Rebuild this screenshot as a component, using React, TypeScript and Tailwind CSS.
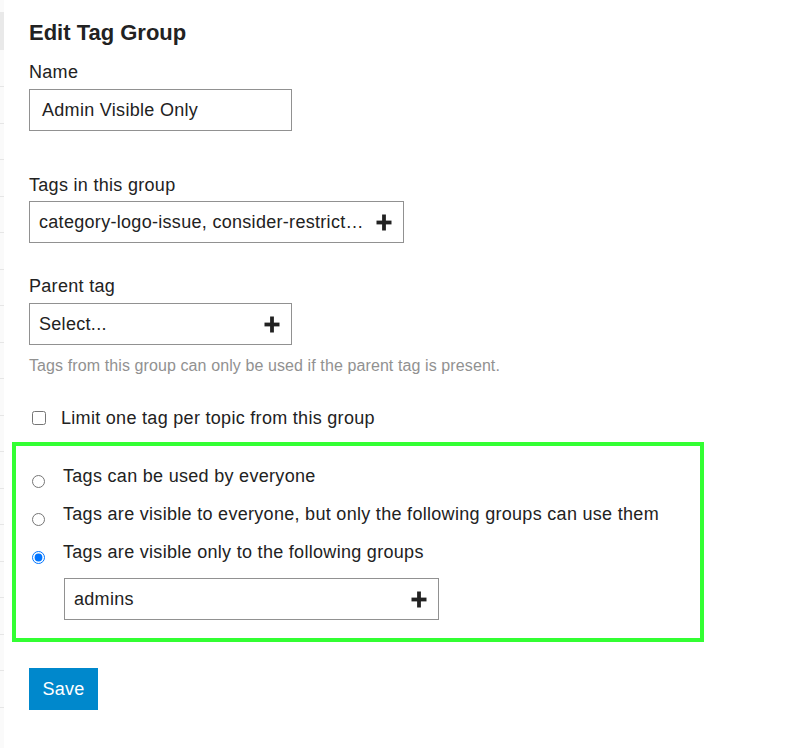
function PlusIcon() {
  return (
    <svg width="16" height="17" viewBox="0 0 16 17" className="shrink-0">
      <rect x="6.1" y="0.5" width="3.8" height="16" fill="#222" />
      <rect x="0.5" y="6.6" width="15" height="3.8" fill="#222" />
    </svg>
  );
}

function SelectBox({ value, width, pad }: { value: string; width: string; pad: string }) {
  return (
    <div className={`flex h-[42px] ${width} items-center justify-between border border-[#919191] bg-white ${pad} pr-[11px]`}>
      <span className="truncate text-[18px] leading-[22px] text-[#222]">{value}</span>
      <PlusIcon />
    </div>
  );
}

function RadioRow({ label, checked }: { label: string; checked?: boolean }) {
  return (
    <label className="flex h-[22px] items-start">
      <input
        type="radio"
        name="visibility"
        checked={!!checked}
        readOnly
        className="m-0 mt-[10px] h-[13px] w-[13px] shrink-0"
      />
      <span className="ml-[18px] text-[18px] leading-[22px] text-[#222]">{label}</span>
    </label>
  );
}

export default function App() {
  const lines = Array.from({ length: 18 });
  return (
    <div className="flex min-h-[748px] w-[806px] bg-white font-[family-name:'Liberation_Sans',Arial,sans-serif] tracking-[0.3px] text-[#222]">
      {/* left gutter of the admin sidebar */}
      <div className="flex w-[4px] shrink-0 flex-col bg-[#fafafa]">
        <div className="mt-[12px] h-[38px] bg-[#e9e9e9]" />
        <div className="mt-[36px] flex flex-col gap-[35.5px]">
          {lines.map((_, i) => (
            <div key={i} className="h-px bg-[#e6e6e6]" />
          ))}
        </div>
      </div>

      <div className="flex flex-col pl-[8px]">
        <div className="ml-[17px] flex flex-col">
          <h2 className="mt-[20px] text-[22px] font-bold leading-[26px] tracking-normal">Edit Tag Group</h2>

          <label className="mt-[15px] text-[18px] leading-[22px]">Name</label>
          <div className="mt-[6px] flex h-[42px] w-[263px] items-center border border-[#919191] pl-[12px]">
            <span className="text-[18px] leading-[22px]">Admin Visible Only</span>
          </div>

          <label className="mt-[43px] text-[18px] leading-[22px]">Tags in this group</label>
          <div className="mt-[5px]">
            <SelectBox value="category-logo-issue, consider-restrict…" width="w-[375px]" pad="pl-[9px]" />
          </div>

          <label className="mt-[32px] text-[18px] leading-[22px]">Parent tag</label>
          <div className="mt-[6px]">
            <SelectBox value="Select..." width="w-[263px]" pad="pl-[9px]" />
          </div>
          <p className="mt-[11px] text-[16px] leading-[20px] tracking-[0.1px] text-[#919191]">
            Tags from this group can only be used if the parent tag is present.
          </p>

          <label className="mt-[31px] flex items-center">
            <input type="checkbox" readOnly className="m-0 ml-[3px] h-[14px] w-[14px]" />
            <span className="ml-[15px] text-[18px] leading-[22px]">Limit one tag per topic from this group</span>
          </label>
        </div>

        <div className="mt-[13px] flex h-[200px] w-[692px] flex-col border-4 border-[#33ff33] pl-[16px] pt-[19px]">
          <div className="flex flex-col gap-[16px]">
            <RadioRow label="Tags can be used by everyone" />
            <RadioRow label="Tags are visible to everyone, but only the following groups can use them" />
            <RadioRow label="Tags are visible only to the following groups" checked />
          </div>
          <div className="ml-[32px] mt-[15px]">
            <SelectBox value="admins" width="w-[375px]" pad="pl-[9px]" />
          </div>
        </div>

        <div className="ml-[17px] mt-[26px]">
          <button className="h-[42px] w-[69px] bg-[#0088cc] text-[18px] leading-[22px] text-white">Save</button>
        </div>
      </div>
    </div>
  );
}
